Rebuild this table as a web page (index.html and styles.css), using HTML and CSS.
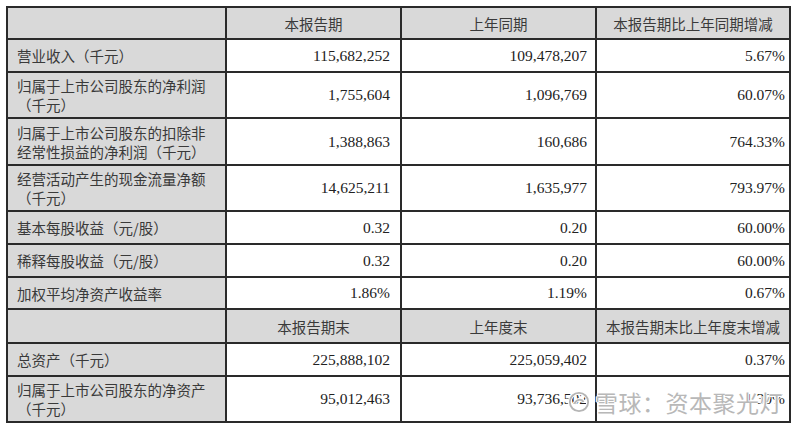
FILE: index.html
```html
<!DOCTYPE html>
<html lang="zh-CN">
<head>
<meta charset="utf-8">
<link rel="stylesheet" href="styles.css">
</head>
<body>
<div class="wrap">
<table class="fin">
  <colgroup>
    <col class="c1"><col class="c2"><col class="c3"><col class="c4">
  </colgroup>
  <tr class="h32">
    <th class="lab"></th><th>本报告期</th><th>上年同期</th><th>本报告期比上年同期增减</th>
  </tr>
  <tr class="h33">
    <td class="lab">营业收入（千元）</td><td class="n2">115,682,252</td><td class="n3">109,478,207</td><td class="n4">5.67%</td>
  </tr>
  <tr class="h46">
    <td class="lab">归属于上市公司股东的净利润<br>（千元）</td><td class="n2">1,755,604</td><td class="n3">1,096,769</td><td class="n4">60.07%</td>
  </tr>
  <tr class="h47">
    <td class="lab">归属于上市公司股东的扣除非<br>经常性损益的净利润（千元）</td><td class="n2">1,388,863</td><td class="n3">160,686</td><td class="n4">764.33%</td>
  </tr>
  <tr class="h46">
    <td class="lab">经营活动产生的现金流量净额<br>（千元）</td><td class="n2">14,625,211</td><td class="n3">1,635,977</td><td class="n4">793.97%</td>
  </tr>
  <tr class="h33">
    <td class="lab">基本每股收益（元/股）</td><td class="n2">0.32</td><td class="n3">0.20</td><td class="n4">60.00%</td>
  </tr>
  <tr class="h33">
    <td class="lab">稀释每股收益（元/股）</td><td class="n2">0.32</td><td class="n3">0.20</td><td class="n4">60.00%</td>
  </tr>
  <tr class="h32">
    <td class="lab">加权平均净资产收益率</td><td class="n2">1.86%</td><td class="n3">1.19%</td><td class="n4">0.67%</td>
  </tr>
  <tr class="h34">
    <th class="lab"></th><th>本报告期末</th><th>上年度末</th><th>本报告期末比上年度末增减</th>
  </tr>
  <tr class="h33">
    <td class="lab">总资产（千元）</td><td class="n2">225,888,102</td><td class="n3">225,059,402</td><td class="n4">0.37%</td>
  </tr>
  <tr class="h46">
    <td class="lab">归属于上市公司股东的净资产<br>（千元）</td><td class="n2">95,012,463</td><td class="n3">93,736,502</td><td class="n4">1.30%</td>
  </tr>
</table>
<div class="wm">
  <svg class="wm-logo" viewBox="0 0 24 24" width="22" height="22">
    <circle cx="12" cy="12" r="10" fill="none" stroke="#fff" stroke-width="4"/>
    <circle cx="12" cy="12" r="10" fill="none" stroke="#b5b5b5" stroke-width="2"/>
    <path d="M7 14c2-5 8-6 10-2" fill="none" stroke="#fff" stroke-width="4"/>
    <path d="M7 14c2-5 8-6 10-2" fill="none" stroke="#b5b5b5" stroke-width="2"/>
  </svg>
  <span class="wm-text">雪球：资本聚光灯</span>
</div>
</div>
</body>
</html>
```

FILE: styles.css
```css
html, body {
  margin: 0;
  padding: 0;
  background: #fff;
}
.wrap {
  position: relative;
  padding: 6px 0 0 6px;
}
.fin {
  border-collapse: collapse;
  table-layout: fixed;
  width: 785px;
  font-family: "Liberation Serif", "Noto Sans CJK SC", serif;
  color: #222;
  font-size: 15.5px;
}
.c1 { width: 219px; }
.c2 { width: 175px; }
.c3 { width: 195px; }
.c4 { width: 194px; }
.fin th, .fin td {
  border: 2px solid #2a2a2a;
  padding: 0;
  vertical-align: middle;
}
.fin th {
  background: #d9d9d9;
  font-weight: normal;
  text-align: center;
  font-family: "Noto Sans CJK SC", sans-serif;
  font-size: 14.5px;
  color: #3a3a3a;
}
.fin td.lab, .fin th.lab {
  background: #d9d9d9;
}
.fin td.lab {
  font-family: "Noto Sans CJK SC", sans-serif;
  font-size: 14.5px;
  line-height: 19px;
  color: #3a3a3a;
  padding-left: 9px;
  text-align: left;
}
.n2, .n3, .n4 { text-align: right; }
.n2 { padding-right: 10px !important; }
.n3 { padding-right: 8px !important; }
.n4 { padding-right: 4px !important; }
.h32 > * { height: 30px; }
.h33 > * { height: 31px; }
.h34 > * { height: 32px; }
.h46 > * { height: 44px; }
.h47 > * { height: 45px; }
.wm {
  position: absolute;
  left: 568px;
  top: 389px;
  display: flex;
  align-items: center;
  gap: 5px;
}
.wm-text {
  font-family: "Noto Sans CJK SC", sans-serif;
  font-size: 23px;
  line-height: 26px;
  color: #b8b8b8;
  letter-spacing: 0.5px;
  text-shadow: 1px 0 #fff, -1px 0 #fff, 0 1px #fff, 0 -1px #fff;
}
```
